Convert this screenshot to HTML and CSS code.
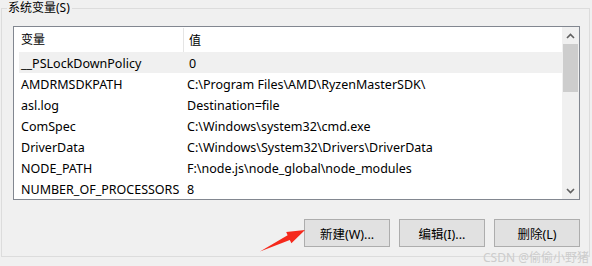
FILE: index.html
```html
<!DOCTYPE html>
<html lang="zh-CN">
<head>
  <meta charset="UTF-8">
  <title>系统变量</title>
  <link rel="stylesheet" href="styles.css">
</head>
<body>
  <fieldset class="group">
    <legend>系统变量(S)</legend>
    <div class="listbox">
      <div class="list">
        <div class="row head">
          <div class="col name">变量</div>
          <div class="col value">值</div>
        </div>
        <div class="row selected">
          <div class="col name">__PSLockDownPolicy</div>
          <div class="col value">0</div>
        </div>
        <div class="row">
          <div class="col name">AMDRMSDKPATH</div>
          <div class="col value">C:\Program Files\AMD\RyzenMasterSDK\</div>
        </div>
        <div class="row">
          <div class="col name">asl.log</div>
          <div class="col value">Destination=file</div>
        </div>
        <div class="row">
          <div class="col name">ComSpec</div>
          <div class="col value">C:\Windows\system32\cmd.exe</div>
        </div>
        <div class="row">
          <div class="col name">DriverData</div>
          <div class="col value">C:\Windows\System32\Drivers\DriverData</div>
        </div>
        <div class="row">
          <div class="col name">NODE_PATH</div>
          <div class="col value">F:\node.js\node_global\node_modules</div>
        </div>
        <div class="row">
          <div class="col name">NUMBER_OF_PROCESSORS</div>
          <div class="col value">8</div>
        </div>
      </div>
      <div class="scrollbar">
        <div class="arrow">
          <svg width="9" height="6" viewBox="0 0 9 6"><path d="M1 5 L4.5 1.5 L8 5" fill="none" stroke="#606060" stroke-width="1.6"/></svg>
        </div>
        <div class="thumb"></div>
        <div class="track"></div>
        <div class="arrow">
          <svg width="9" height="6" viewBox="0 0 9 6"><path d="M1 1 L4.5 4.5 L8 1" fill="none" stroke="#606060" stroke-width="1.6"/></svg>
        </div>
      </div>
    </div>
    <div class="buttons">
      <button class="btn">新建(W)...</button>
      <button class="btn">编辑(I)...</button>
      <button class="btn">删除(L)</button>
    </div>
  </fieldset>

  <!-- annotation added on top of the screenshot -->
  <svg class="pointer" width="592" height="266" viewBox="0 0 592 266">
    <polygon points="260,251.5 287.6,235.3 286.2,232 305,230 291.4,243.2 289.8,239.9" fill="#f5291c"/>
  </svg>
  <div class="watermark">CSDN @偷偷小野猪</div>
</body>
</html>
```
FILE: styles.css
```css
body {
  margin: 0;
  background-color: #f0f0f0;
  font-family: "Noto Sans", "Noto Sans CJK SC", sans-serif;
  font-size: 12.5px;
  color: #000;
  position: relative;
  width: 592px;
  height: 266px;
  overflow: hidden;
}
.group {
  margin: 0 0 0 1px;
  padding: 0;
  width: 589px;
  height: 257px;
  box-sizing: border-box;
  border: 1px solid #dcdcdc;
  min-width: 0;
}
.group legend {
  margin-left: 5px;
  padding: 0 2px 0 1px;
  line-height: 16px;
  font-size: 12px;
}
.listbox {
  display: flex;
  margin: 10px 0 0 11px;
  width: 567px;
  height: 174px;
  box-sizing: border-box;
  border: 1px solid #828790;
  background-color: #fff;
}
.list {
  width: 548px;
}
.row {
  display: flex;
  height: 21px;
  padding-top: 1px;
  box-sizing: border-box;
  align-items: center;
  white-space: nowrap;
}
.row.head {
  height: 25px;
  padding-top: 0;
}
.row.selected {
  margin-left: 5px;
  background-color: #f0f0f0;
}
.row.selected .name {
  width: 164px;
  padding-left: 2px;
}
.col.name {
  width: 162px;
  padding-left: 7px;
}
.col.value {
  padding-left: 4px;
}
.row.head .name {
  border-right: 1px solid #e5e5e5;
  height: 24px;
  line-height: 24px;
  font-size: 12px;
}
.row.head .value {
  padding-left: 5px;
  font-size: 12px;
}
.scrollbar {
  width: 17px;
  display: flex;
  flex-direction: column;
  background-color: #f0f0f0;
}
.arrow {
  height: 17px;
  display: flex;
  align-items: center;
  justify-content: center;
}
.thumb {
  height: 48px;
  margin: 0 1px;
  background-color: #cdcdcd;
}
.track {
  flex: 1;
}
.buttons {
  display: flex;
  justify-content: flex-end;
  gap: 9px;
  margin: 19px 9px 0 0;
}
.btn {
  width: 86px;
  height: 28px;
  border: 1px solid #adadad;
  background-color: #e1e1e1;
  font-family: "Noto Sans", "Noto Sans CJK SC", sans-serif;
  font-size: 12.5px;
  color: #000;
  padding: 0;
}
.pointer {
  position: absolute;
  left: 0;
  top: 0;
  pointer-events: none;
}
.watermark {
  position: absolute;
  right: 3px;
  top: 248px;
  font-size: 12px;
  color: #cccccc;
}
```
